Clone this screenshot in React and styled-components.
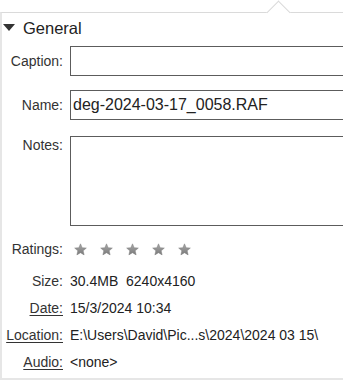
import React from 'react';
import styled, { createGlobalStyle } from 'styled-components';

const GlobalStyle = createGlobalStyle`
  html, body {
    margin: 0;
    padding: 0;
    background: #ffffff;
    overflow: hidden;
  }
  body {
    font-family: "Liberation Sans", Arial, sans-serif;
    color: #2b2b2b;
  }
`;

const Panel = styled.section`
  position: relative;
  width: 100%;
  margin-top: 12px;
  padding-bottom: 3px;
  border-top: 1px solid #dadada;
  border-left: 2px solid #e6e6e6;
  border-bottom: 2px solid #e6e6e6;
  box-sizing: border-box;
`;

const Pointer = styled.span`
  position: absolute;
  left: 268px;
  top: -9px;
  width: 16px;
  height: 16px;
  background: #ffffff;
  border-top: 1px solid #dadada;
  border-left: 1px solid #dadada;
  transform: rotate(45deg);
`;

const Header = styled.div`
  display: flex;
  align-items: center;
  gap: 8px;
  height: 30px;
  padding-left: 1px;
  font-size: 16.5px;
  color: #222;
`;

const Caret = styled.span`
  width: 0;
  height: 0;
  border-left: 6.5px solid transparent;
  border-right: 6.5px solid transparent;
  border-top: 7px solid #333;
  margin-top: -1px;
`;

const Row = styled.div`
  display: grid;
  grid-template-columns: 61px 1fr;
  column-gap: 7px;
  align-items: ${p => (p.$top ? 'start' : 'center')};
  margin-top: ${p => p.$mt || 0}px;
  min-height: ${p => p.$h || 27}px;
  font-size: 14px;
`;

const Label = styled.span`
  text-align: right;
  line-height: 18px;
  color: #333;
  white-space: nowrap;
  text-decoration: ${p => (p.$link ? 'underline' : 'none')};
  text-underline-offset: 2px;
`;

const Value = styled.span`
  color: #222;
  white-space: pre;
  line-height: 18px;
  overflow: hidden;
`;

const Field = styled.div`
  height: 30px;
  border: 1px solid #5c5c5c;
  border-right: none;
  box-sizing: border-box;
  padding-left: 2px;
  display: flex;
  align-items: center;
  font-size: 16px;
  color: #222;
  background: #fff;
`;

const NotesBox = styled(Field)`
  height: 90px;
`;

const Stars = styled.div`
  display: flex;
  gap: 13px;
  padding-left: 4px;
`;

const Star = () => (
  <svg width="13" height="13" viewBox="0 0 24 24">
    <defs>
      <linearGradient id="sg" x1="0" y1="0" x2="0" y2="1">
        <stop offset="0" stopColor="#a8a8a8" />
        <stop offset="1" stopColor="#7a7a7a" />
      </linearGradient>
    </defs>
    <path
      d="M12 1.5l3.1 7.1 7.7.7-5.8 5.1 1.7 7.6L12 18l-6.7 4 1.7-7.6-5.8-5.1 7.7-.7z"
      fill="url(#sg)"
      stroke="#777"
      strokeWidth="0.8"
    />
  </svg>
);

export default function App() {
  return (
    <>
      <GlobalStyle />
      <Panel>
        <Pointer />
        <Header>
          <Caret />
          General
        </Header>
        <Row $mt={3} $h={30}>
          <Label>Caption:</Label>
          <Field />
        </Row>
        <Row $mt={14} $h={30}>
          <Label>Name:</Label>
          <Field>deg-2024-03-17_0058.RAF</Field>
        </Row>
        <Row $mt={16} $h={90} $top>
          <Label>Notes:</Label>
          <NotesBox />
        </Row>
        <Row $mt={10} $h={26}>
          <Label>Ratings:</Label>
          <Stars>
            {[0, 1, 2, 3, 4].map(i => <Star key={i} />)}
          </Stars>
        </Row>
        <Row $mt={5}>
          <Label>Size:</Label>
          <Value>30.4MB  6240x4160</Value>
        </Row>
        <Row>
          <Label $link>Date:</Label>
          <Value>15/3/2024 10:34</Value>
        </Row>
        <Row>
          <Label $link>Location:</Label>
          <Value>E:\Users\David\Pic...s\2024\2024 03 15\</Value>
        </Row>
        <Row>
          <Label $link>Audio:</Label>
          <Value>{'<none>'}</Value>
        </Row>
      </Panel>
    </>
  );
}
